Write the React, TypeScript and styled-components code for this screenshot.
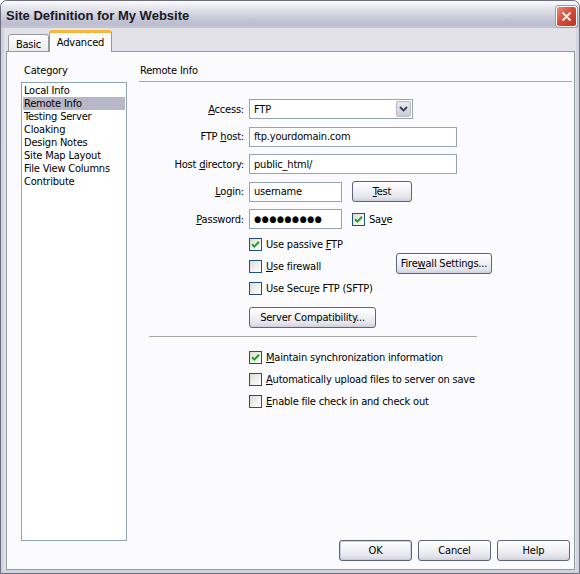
import React from "react";
import styled, { createGlobalStyle } from "styled-components";

const GlobalStyle = createGlobalStyle`
  html, body {
    margin: 0;
    padding: 0;
    background: #ffffff;
  }
  body {
    font-family: Tahoma, "DejaVu Sans Condensed", "Liberation Sans", sans-serif;
    font-size: 11px;
    letter-spacing: -0.2px;
    color: #000000;
  }
`;

const Window = styled.div`
  width: 580px;
  height: 574px;
  box-sizing: border-box;
  display: flex;
  flex-direction: column;
  border: 1px solid #6d6d80;
  border-radius: 7px 7px 0 0;
  background: #d3d3de;
  overflow: hidden;
`;

const TitleBar = styled.div`
  height: 27px;
  flex: none;
  display: flex;
  align-items: center;
  justify-content: space-between;
  padding: 0 2px 0 5px;
  background: linear-gradient(
    to bottom,
    #fdfdfe 0%,
    #ebebf1 18%,
    #d2d3df 50%,
    #bcbdce 82%,
    #c5c6d4 100%
  );
`;

const TitleText = styled.span`
  font-family: "Trebuchet MS", "Liberation Sans", sans-serif;
  font-weight: bold;
  font-size: 13px;
  letter-spacing: 0;
  color: #1a1a22;
  padding-top: 2px;
`;

const CloseButton = styled.div`
  width: 21px;
  height: 21px;
  box-sizing: border-box;
  border: 1px solid #ffffff;
  border-radius: 3px;
  margin-top: 3px;
  background: linear-gradient(135deg, #e98b79 0%, #d6503b 45%, #b83223 100%);
  box-shadow: 0 0 0 1px #9a9aab;
  display: flex;
  align-items: center;
  justify-content: center;
`;

const Body = styled.div`
  flex: 1;
  display: flex;
  flex-direction: column;
  margin: 0 3px 3px 3px;
  padding: 3px 1px 0 2px;
  background: #e2e2e8;
`;

const TabStrip = styled.div`
  display: flex;
  align-items: flex-end;
  padding-left: 2px;
  height: 21px;
  position: relative;
  z-index: 1;
  margin-bottom: -1px;
`;

const Tab = styled.div<{ $active?: boolean }>`
  box-sizing: border-box;
  height: ${(p) => (p.$active ? "22px" : "18px")};
  padding: ${(p) => (p.$active ? "3px 6px 0 6px" : "3px 5px 0 5px")};
  border: 1px solid #919b9c;
  border-bottom: ${(p) => (p.$active ? "none" : "1px solid #919b9c")};
  border-top: ${(p) => (p.$active ? "3px solid #f5b83c" : "1px solid #919b9c")};
  border-radius: 3px 3px 0 0;
  background: ${(p) =>
    p.$active ? "#fbfbfd" : "linear-gradient(#ffffff, #ececf1)"};
  width: ${(p) => (p.$active ? "63px" : "41px")};
  display: flex;
  justify-content: center;
  color: #000;
`;

const Panel = styled.div`
  flex: 1;
  display: flex;
  flex-direction: column;
  box-sizing: border-box;
  border: 1px solid #919b9c;
  background: #fbfbfd;
  padding: 12px 4px 7px 14px;
`;

const Main = styled.div`
  flex: 1;
  display: grid;
  grid-template-columns: 106px 1fr;
  column-gap: 12px;
`;

const SideColumn = styled.div`
  display: flex;
  flex-direction: column;
`;

const Caption = styled.div`
  line-height: 13px;
  padding-left: 3px;
  margin-bottom: 5px;
`;

const ListBox = styled.div`
  flex: 1;
  border: 1px solid #8fa3b7;
  background: #ffffff;
  padding: 1px;
`;

const ListItem = styled.div<{ $selected?: boolean }>`
  height: 13px;
  line-height: 13px;
  padding-left: 1px;
  white-space: nowrap;
  background: ${(p) => (p.$selected ? "#b7b7c7" : "transparent")};
`;

const ContentColumn = styled.div`
  display: flex;
  flex-direction: column;
`;

const SectionHeading = styled.div`
  line-height: 13px;
  padding: 0 0 4px 1px;
  border-bottom: 1px solid #a6a6ae;
  margin-right: -2px;
`;

const FormGrid = styled.div`
  display: grid;
  grid-template-columns: 105px auto;
  grid-auto-rows: 20px;
  column-gap: 5px;
  row-gap: 7.5px;
  margin-top: 17px;
`;

const FieldLabel = styled.label`
  text-align: right;
  align-self: center;
  white-space: nowrap;
`;

const FieldLine = styled.div`
  display: flex;
  align-items: center;
  gap: 10px;
`;

const TextBox = styled.div<{ $width: number }>`
  width: ${(p) => p.$width}px;
  height: 20px;
  box-sizing: border-box;
  border: 1px solid #95a3b2;
  background: #ffffff;
  padding-left: 4px;
  display: flex;
  align-items: center;
  white-space: nowrap;
`;

const Dots = styled.span`
  font-size: 9px;
  letter-spacing: 0.5px;
`;

const SelectBox = styled.div`
  width: 164px;
  height: 20px;
  box-sizing: border-box;
  border: 1px solid #95a3b2;
  background: #ffffff;
  display: flex;
  align-items: center;
  justify-content: space-between;
  padding: 1px 1px 1px 4px;
`;

const DropArrow = styled.div`
  width: 15px;
  height: 16px;
  box-sizing: border-box;
  border: 1px solid #b7bcc8;
  border-radius: 2px;
  background: linear-gradient(#e9eaf1, #c9cbd9);
  display: flex;
  align-items: center;
  justify-content: center;
`;

const Button = styled.div<{ $width: number; $default?: boolean }>`
  width: ${(p) => p.$width}px;
  height: 21px;
  box-sizing: border-box;
  border: 1px solid #5f6476;
  border-radius: 3px;
  background: linear-gradient(
    to bottom,
    #ffffff 0%,
    #f5f5f8 35%,
    #e4e4ec 80%,
    #cfd0dc 100%
  );
  box-shadow: ${(p) => (p.$default ? "inset 0 0 0 1px #c3cde4" : "none")};
  display: flex;
  align-items: center;
  justify-content: center;
  white-space: nowrap;
`;

const Options = styled.div`
  display: grid;
  grid-template-columns: 147px auto;
  grid-template-rows: 22px 22px 22px;
  margin: 4px 0 0 110px;
`;

const CheckRow = styled.div`
  display: flex;
  align-items: center;
  gap: 4px;
  white-space: nowrap;
`;

const OptionRow = styled(CheckRow)`
  grid-column: 1;
`;

const Box = styled.span`
  width: 13px;
  height: 13px;
  box-sizing: border-box;
  border: 1px solid #1c5180;
  background: linear-gradient(135deg, #dcdcd6 0%, #f2f2ef 60%, #ffffff 100%);
  display: inline-flex;
  align-items: center;
  justify-content: center;
  flex: none;
`;

const SideButton = styled.div`
  grid-column: 2;
  grid-row: 2;
  align-self: start;
  margin-top: -2px;
`;

const CompatLine = styled.div`
  margin: 8px 0 0 110px;
`;

const Divider = styled.div`
  width: 328px;
  height: 1px;
  background: #a6a6ae;
  margin: 8px 0 0 10px;
`;

const SyncList = styled.div`
  display: grid;
  grid-auto-rows: 22px;
  margin: 9px 0 0 110px;
`;

const Footer = styled.div`
  display: flex;
  justify-content: flex-end;
  gap: 6px;
  margin-top: -1px;
  height: 22px;
`;

const Check = ({ checked }: { checked?: boolean }) => (
  <Box>
    {checked && (
      <svg width="9" height="9" viewBox="0 0 9 9">
        <path
          d="M1 4.2 L3.4 6.6 L8 1.8"
          fill="none"
          stroke="#21a121"
          strokeWidth="2"
        />
      </svg>
    )}
  </Box>
);

const categories = [
  "Local Info",
  "Remote Info",
  "Testing Server",
  "Cloaking",
  "Design Notes",
  "Site Map Layout",
  "File View Columns",
  "Contribute",
];

export default function App() {
  return (
    <>
      <GlobalStyle />
      <Window>
        <TitleBar>
          <TitleText>Site Definition for My Website</TitleText>
          <CloseButton>
            <svg width="11" height="11" viewBox="0 0 11 11">
              <path
                d="M1.5 1.5 L9.5 9.5 M9.5 1.5 L1.5 9.5"
                stroke="#ffffff"
                strokeWidth="1.8"
              />
            </svg>
          </CloseButton>
        </TitleBar>
        <Body>
          <TabStrip>
            <Tab>Basic</Tab>
            <Tab $active>Advanced</Tab>
          </TabStrip>
          <Panel>
            <Main>
              <SideColumn>
                <Caption>Category</Caption>
                <ListBox>
                  {categories.map((c) => (
                    <ListItem key={c} $selected={c === "Remote Info"}>
                      {c}
                    </ListItem>
                  ))}
                </ListBox>
              </SideColumn>
              <ContentColumn>
                <SectionHeading>Remote Info</SectionHeading>
                <FormGrid>
                  <FieldLabel>
                    <u>A</u>ccess:
                  </FieldLabel>
                  <FieldLine>
                    <SelectBox>
                      <span>FTP</span>
                      <DropArrow>
                        <svg width="9" height="6" viewBox="0 0 9 6">
                          <path
                            d="M1 1 L4.5 4.5 L8 1"
                            fill="none"
                            stroke="#3c4050"
                            strokeWidth="1.8"
                          />
                        </svg>
                      </DropArrow>
                    </SelectBox>
                  </FieldLine>

                  <FieldLabel>
                    FTP <u>h</u>ost:
                  </FieldLabel>
                  <FieldLine>
                    <TextBox $width={208}>ftp.yourdomain.com</TextBox>
                  </FieldLine>

                  <FieldLabel>
                    Host <u>d</u>irectory:
                  </FieldLabel>
                  <FieldLine>
                    <TextBox $width={208}>public_html/</TextBox>
                  </FieldLine>

                  <FieldLabel>
                    <u>L</u>ogin:
                  </FieldLabel>
                  <FieldLine>
                    <TextBox $width={93}>username</TextBox>
                    <Button $width={60}>
                      <span>
                        <u>T</u>est
                      </span>
                    </Button>
                  </FieldLine>

                  <FieldLabel>
                    <u>P</u>assword:
                  </FieldLabel>
                  <FieldLine>
                    <TextBox $width={93}>
                      <Dots>●●●●●●●●●</Dots>
                    </TextBox>
                    <CheckRow>
                      <Check checked />
                      <span>
                        Sa<u>v</u>e
                      </span>
                    </CheckRow>
                  </FieldLine>
                </FormGrid>

                <Options>
                  <OptionRow>
                    <Check checked />
                    <span>
                      Use passive <u>F</u>TP
                    </span>
                  </OptionRow>
                  <OptionRow>
                    <Check />
                    <span>
                      <u>U</u>se firewall
                    </span>
                  </OptionRow>
                  <OptionRow>
                    <Check />
                    <span>
                      Use Secu<u>r</u>e FTP (SFTP)
                    </span>
                  </OptionRow>
                  <SideButton>
                    <Button $width={96}>
                      <span>
                        Fire<u>w</u>all Settings...
                      </span>
                    </Button>
                  </SideButton>
                </Options>

                <CompatLine>
                  <Button $width={127}>
                    <span>
                      Server Compatibilit<u>y</u>...
                    </span>
                  </Button>
                </CompatLine>

                <Divider />

                <SyncList>
                  <CheckRow>
                    <Check checked />
                    <span>
                      <u>M</u>aintain synchronization information
                    </span>
                  </CheckRow>
                  <CheckRow>
                    <Check />
                    <span>
                      <u>A</u>utomatically upload files to server on save
                    </span>
                  </CheckRow>
                  <CheckRow>
                    <Check />
                    <span>
                      <u>E</u>nable file check in and check out
                    </span>
                  </CheckRow>
                </SyncList>
              </ContentColumn>
            </Main>
            <Footer>
              <Button $width={73} $default>
                OK
              </Button>
              <Button $width={73}>Cancel</Button>
              <Button $width={73}>Help</Button>
            </Footer>
          </Panel>
        </Body>
      </Window>
    </>
  );
}
